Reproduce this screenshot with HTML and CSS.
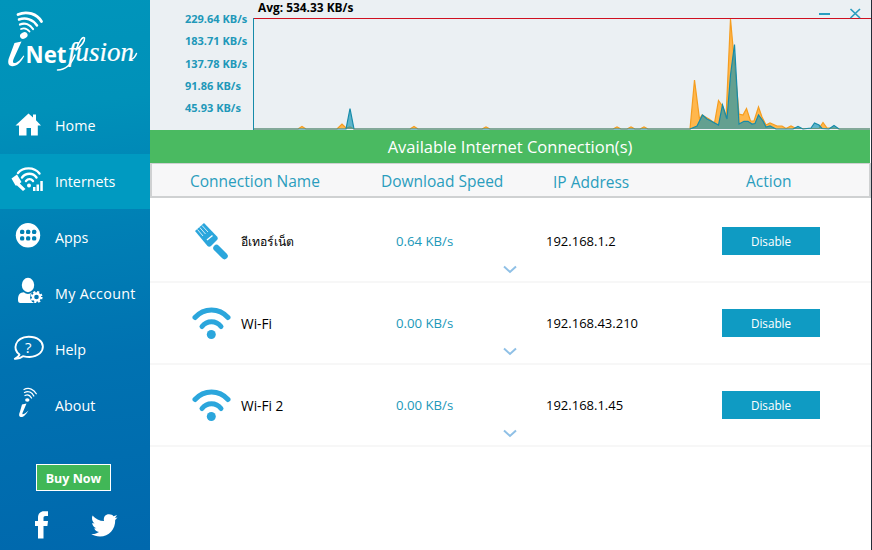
FILE: index.html
```
<!DOCTYPE html>
<html lang="en">
<head>
    <meta charset="UTF-8">
    <meta name="viewport" content="width=device-width, initial-scale=1.0">
    <title>iNetfusion</title>
    <link rel="stylesheet" href="styles.css">
</head>
<body>

    <svg class="symbols" width="0" height="0">
        <symbol id="wifi" viewBox="0 0 40 36">
            <g fill="none" stroke="#2ba6dc" stroke-width="5" stroke-linecap="round">
                <path d="M3 12.500C12 2.500 27 2.500 36 12.500"/>
                <path d="M10 21.500C15 15.300 24 15.300 29 21.500"/>
            </g>
            <circle cx="19.300" cy="29.500" r="4.500" fill="#2ba6dc"/>
        </symbol>
        <symbol id="chevron" viewBox="0 0 14 9">
            <path d="M1 1.500l6 5.500 6-5.500" fill="none" stroke="#8fc0e6" stroke-width="2"/>
        </symbol>
    </svg>

    <div class="app">
        <aside class="sidebar">
            <svg class="logo" width="150" height="98" viewBox="0 0 150 98">
                <g fill="none" stroke="#fff" stroke-linecap="round">
                    <path d="M18 14.500C27 10.500 37 14 41.500 21.500" stroke-width="2.800"/>
                    <path d="M19 19.500C26 17 33 19.500 37 25.500" stroke-width="2.500"/>
                    <path d="M20 24.500C25 22.500 30 24.500 33 29" stroke-width="2.200"/>
                    <path d="M21 29C24.500 27.500 27.500 29 29.500 31.500" stroke-width="1.800"/>
                </g>
                <ellipse cx="23.800" cy="35.500" rx="3.900" ry="3.100" transform="rotate(-25 23.800 35.500)" fill="#fff"/>
                <path d="M14.500 43L21.500 41.500L14 58C12.500 61.500 12.500 63.500 15 63C18 62.500 21 59 23.500 55.500L24.300 56C21 62.500 16.500 66.500 12 66.200C7.500 65.800 7.500 61 9.500 56.500Z" fill="#fff"/>
                <text class="logo-net" x="25.500" y="62.500" textLength="41" lengthAdjust="spacingAndGlyphs">Net</text>
                <text class="logo-fusion" x="68" y="60.500" textLength="66" lengthAdjust="spacingAndGlyphs">fusion</text>
                <path d="M75 55C71 65 66 70 57.500 70M76 50C79 41 83 36 84.500 38C85 41 81 46 76 50M131 59.500C134 58.500 135.500 56 136.500 53.500" fill="none" stroke="#fff" stroke-width="1.500" stroke-linecap="round"/>
            </svg>

            <ul class="menu">
                <li>
                    <svg width="55" height="55" viewBox="0 0 55 55"><path d="M15.500 27.500L28.500 15.500L33 19.500V16.500H36V22.300L41 27.500H37.800V37.500H31V30H26.500V37.500H19V27.500Z" fill="#fff"/></svg>
                    <span>Home</span>
                </li>
                <li class="active">
                    <svg width="55" height="55" viewBox="0 0 55 55">
                        <g fill="none" stroke="#fff" stroke-width="2.400" stroke-linecap="round">
                            <path d="M18 19C23 13 34 12.500 39.500 19.500"/>
                            <path d="M22 23.500C26 18.500 33 18.500 36.500 23.500"/>
                            <path d="M26 27C28 24.500 31 24.500 33 27"/>
                        </g>
                        <circle cx="29" cy="31.500" r="2" fill="#fff"/>
                        <path d="M11.500 24.500L17 20.500L21.500 28L19.800 29.500L25.500 35L23 37L17 31.500L15.500 31.500Z" fill="#fff"/>
                        <path d="M33 37v-4h2.500v4zM36.500 37v-6.500H39V37zM40.300 37V27h2.500v10z" fill="#fff"/>
                    </svg>
                    <span>Internets</span>
                </li>
                <li>
                    <svg width="55" height="55" viewBox="0 0 55 55">
                        <circle cx="28" cy="25.300" r="12.200" fill="#fff"/>
                        <g fill="#0081b4">
                            <rect x="20" y="19.700" width="4.300" height="4.300" rx="1.500"/>
                            <rect x="26" y="19.700" width="4.300" height="4.300" rx="1.500"/>
                            <rect x="32" y="19.700" width="4.300" height="4.300" rx="1.500"/>
                            <rect x="20" y="26.200" width="4.300" height="4.300" rx="1.500"/>
                            <rect x="26" y="26.200" width="4.300" height="4.300" rx="1.500"/>
                            <rect x="32" y="26.200" width="4.300" height="4.300" rx="1.500"/>
                        </g>
                    </svg>
                    <span>Apps</span>
                </li>
                <li class="account">
                    <svg width="55" height="55" viewBox="0 0 55 55">
                        <ellipse cx="28" cy="19" rx="6.200" ry="7.200" fill="#fff"/>
                        <path d="M18 33C18 28.500 20 26.500 24 26.200C26 28.500 30 28.500 32 26.200C35 26.500 36 28 37 30V37H21C18.500 37 18 36 18 33Z" fill="#fff"/>
                        <circle cx="36.500" cy="31" r="6.500" fill="#0076b3"/>
                        <circle cx="36.500" cy="31" r="5" fill="none" stroke="#fff" stroke-width="2.200" stroke-dasharray="2.100 1.827"/>
                        <circle cx="36.500" cy="31" r="3.500" fill="none" stroke="#fff" stroke-width="2.400"/>
                    </svg>
                    <span>My Account</span>
                </li>
                <li>
                    <svg width="55" height="55" viewBox="0 0 55 55">
                        <path d="M19.500 32.500C12.500 27.500 14.500 15.500 28.500 14.800C47 14.500 48 34 29.500 35C26 35 24.500 34.500 23 34.200C20.500 36.200 17.500 37 14.800 36.800C17.500 35.500 19 34.500 19.500 32.500Z" fill="none" stroke="#fff" stroke-width="1.900" stroke-linejoin="round"/>
                        <text class="question" x="25" y="30.500">?</text>
                    </svg>
                    <span>Help</span>
                </li>
                <li>
                    <svg width="55" height="55" viewBox="0 0 55 55">
                        <g fill="none" stroke="#fff" stroke-width="1.300" stroke-linecap="round">
                            <path d="M24 11.500C29 8.800 34 11.500 36.300 15.800"/>
                            <path d="M24.500 14.500C28.500 12.500 32 14.500 33.800 18"/>
                            <path d="M25 17.500C28 16 30 17.500 31.500 20"/>
                        </g>
                        <ellipse cx="27.300" cy="22" rx="2.200" ry="1.700" fill="#fff"/>
                        <path d="M22 26.500L26.500 25.500L22.500 35C22 37 23.500 37 28.500 32.500C25.500 37.500 23 39.300 20.800 39C18.500 38.500 19 36 20 33.500Z" fill="#fff"/>
                    </svg>
                    <span>About</span>
                </li>
            </ul>

            <button class="buy-btn">Buy Now</button>

            <div class="social">
                <svg width="14" height="28" viewBox="0 0 14 28"><path d="M3 27.500V15H0V10H3V7C3 2.500 5.500 .300 9 .300H13V5H10.500C9 5 8.500 5.800 8.500 7V10H13L12.400 15H8.500V27.500Z" fill="#fff"/></svg>
                <svg width="27" height="23" viewBox="0 0 27 23"><path d="M1.500 1.500C4.500 5 8.500 7 13 7C12.200 3 14.500 .300 18 .300C20 .300 21.500 1 22.500 2.200L26 1L24 4L26.500 3.500L24.200 6C24.500 15 18 22.500 9 22.500C5.500 22.500 2.500 21.500 .300 20C3.500 20.200 6 19.400 8 18C5.500 17.800 4 16.300 3.300 14.300L5.500 14.200C3 13.500 1.300 11.500 1.200 9L3.500 9.500C1.300 7.800 .300 4.500 1.500 1.500Z" fill="#fff"/></svg>
            </div>
        </aside>

        <main class="content">
            <section class="graph">
                <ul class="scale">
                    <li>229.64 KB/s</li>
                    <li>183.71 KB/s</li>
                    <li>137.78 KB/s</li>
                    <li>91.86 KB/s</li>
                    <li>45.93 KB/s</li>
                </ul>
                <svg width="618" height="130" viewBox="253 0 618 130">
                    <path d="M254 129L298 129L302 126.500L306 129H337L342 124L346 128L350 127L354 129H410L414 126.500L418 129H482L486 127L490 129H613L617 127L621 129H627L631 127L635 129H640L644 127L648 129H690L694.500 80L699.500 119L702 115L709 119L714.500 123L718.500 100.500L723 107L726 118L730.500 19L739 114L743 115L746.500 108.500L750.500 121H754L758.500 107L762 117L766 125L770 123L777 126H782L786 128.500L791 126L796 128.500H819L823 122.500L827 128L834 128L840 129H870" fill="#ffb74d" stroke="#f59d1f" stroke-width="1.200"/>
                    <path d="M254 129H346L350 108.500L354 129H690L697 126L702.500 115L707 119L711 121L718.500 125L722.500 105L727 119L730.500 75L734.500 44.500L739 124L744 121.300H748L752 124L755 123.500L758.500 115L763 121L766 127L770 126L776 129H793L798 126.500L803 129L811 128L814.500 123L819 125L822 128.500L829 129L834 125.500L839 129H870" fill="#1193b4" fill-opacity=".65" stroke="#168ba9" stroke-width="1.200"/>
                    <path d="M253 18.500H871" stroke="#cf1020"/>
                    <path d="M253.500 18V130" stroke="#168ba9"/>
                    <path d="M819 14H830" stroke="#2b9dbf" stroke-width="2"/>
                    <path d="M850.500 9L860 18M860 9L850.500 18" stroke="#2b9dbf" stroke-width="1.700"/>
                </svg>
                <p class="avg">Avg: 534.33 KB/s</p>
            </section>

            <h1>Available Internet Connection(s)</h1>

            <div class="table-head">
                <span>Connection Name</span>
                <span>Download Speed</span>
                <span class="ip-head">IP Address</span>
                <span>Action</span>
            </div>

            <div class="rows">
                <div class="row">
                    <svg width="40" height="40" viewBox="0 0 40 40">
                        <path d="M3 10L12 2L25 15.500C26 17 26 18 25 19L19 25C18 26 16.500 26 15.500 25Z" fill="#2ba6dc"/>
                        <path d="M5.500 8.500L11 15M7.800 6.500L13.500 13M10 4.500L16 11" stroke="#fff" stroke-width=".8"/>
                        <path d="M15 19L20.500 14.500" stroke="#fff" stroke-width="1.300"/>
                        <path d="M24.500 27L32.500 35" stroke="#2ba6dc" stroke-width="6.500" stroke-linecap="round"/>
                    </svg>
                    <span class="name thai">อีเทอร์เน็ต</span>
                    <span class="speed">0.64 KB/s</span>
                    <svg class="chevron" width="14" height="9"><use href="#chevron"/></svg>
                    <span class="ip">192.168.1.2</span>
                    <button>Disable</button>
                </div>
                <div class="row">
                    <svg width="40" height="36"><use href="#wifi"/></svg>
                    <span class="name">Wi-Fi</span>
                    <span class="speed">0.00 KB/s</span>
                    <svg class="chevron" width="14" height="9"><use href="#chevron"/></svg>
                    <span class="ip">192.168.43.210</span>
                    <button>Disable</button>
                </div>
                <div class="row">
                    <svg width="40" height="36"><use href="#wifi"/></svg>
                    <span class="name">Wi-Fi 2</span>
                    <span class="speed">0.00 KB/s</span>
                    <svg class="chevron" width="14" height="9"><use href="#chevron"/></svg>
                    <span class="ip">192.168.1.45</span>
                    <button>Disable</button>
                </div>
            </div>
        </main>
    </div>

</body>
</html>
```
FILE: styles.css
```
* {
    margin: 0;
    padding: 0;
    box-sizing: border-box;
    font-family: "Open Sans", "Noto Sans", sans-serif;
}

body {
    background-color: white;
    overflow: hidden;
}

ul {
    list-style: none;
}

svg {
    display: block;
}

.symbols {
    position: absolute;
}

.app {
    display: flex;
    width: 872px;
    height: 550px;
    border-right: 1px solid #252d38;
}

/* Sidebar */
.sidebar {
    width: 150px;
    flex-shrink: 0;
    background: linear-gradient(172deg, #0095bb 0%, #0091b9 20%, #0080b5 42%, #0072b1 65%, #0068ad 100%);
}

.logo-net {
    font-size: 23px;
    font-weight: bold;
    fill: white;
}

.logo-fusion {
    font-family: "Liberation Serif", serif;
    font-size: 27px;
    font-style: italic;
    fill: white;
    stroke: white;
    stroke-width: 0.2px;
}

.menu li {
    display: flex;
    align-items: center;
    height: 55px;
    margin-bottom: 1px;
    color: white;
    font-size: 14.3px;
}

.menu li.active {
    background-color: #009ac1;
}

.menu li.account span {
    letter-spacing: 0.3px;
}

.question {
    font-size: 15px;
    fill: white;
}

.buy-btn {
    display: block;
    width: 75px;
    height: 27px;
    margin: 31px 0 0 36px;
    padding-top: 1px;
    border: 1px solid white;
    background-color: #41b757;
    color: white;
    font-size: 12.5px;
    font-weight: bold;
}

.social {
    display: flex;
    align-items: center;
    gap: 42px;
    margin: 20px 0 0 35px;
}

/* Main area */
.content {
    flex: 1;
}

.graph {
    display: flex;
    position: relative;
    height: 130px;
    background-color: #ebf0f3;
}

.scale {
    width: 103px;
    padding: 8px 0 0 35px;
    color: #2198b9;
    font-size: 11px;
    font-weight: bold;
    line-height: 22.3px;
    white-space: nowrap;
}

.avg {
    position: absolute;
    left: 108px;
    top: 0;
    font-size: 11.9px;
    font-weight: bold;
    line-height: 15px;
}

h1 {
    width: 720px;
    height: 33px;
    background-color: #4aba61;
    color: white;
    font-size: 16.5px;
    font-weight: normal;
    line-height: 34px;
    text-align: center;
}

.table-head {
    display: grid;
    grid-template-columns: 191px 172px 193px 100px;
    align-items: center;
    height: 35px;
    padding: 1px 0 0 38px;
    border: 2px solid #cfd1d2;
    border-top-width: 1px;
    background-color: #f7f7f8;
    color: #2a9dbd;
    font-size: 15.5px;
}

.ip-head {
    padding-top: 2px;
}

.rows {
    padding-top: 3px;
}

.row {
    display: grid;
    grid-template-columns: 49px 155px 107px 43px 176px 98px;
    align-items: center;
    height: 82px;
    padding-left: 42px;
    border-bottom: 2px solid #f7f7f7;
    font-size: 13px;
}

.row .name {
    font-size: 13.7px;
}

.row .thai {
    font-size: 12.2px;
}

.row .speed {
    color: #2198b9;
    font-size: 13.2px;
}

.row .chevron {
    align-self: end;
    margin-bottom: 7px;
}

.row button {
    height: 28px;
    border: none;
    background-color: #0f9bc3;
    color: white;
    font-size: 11.7px;
}
```
